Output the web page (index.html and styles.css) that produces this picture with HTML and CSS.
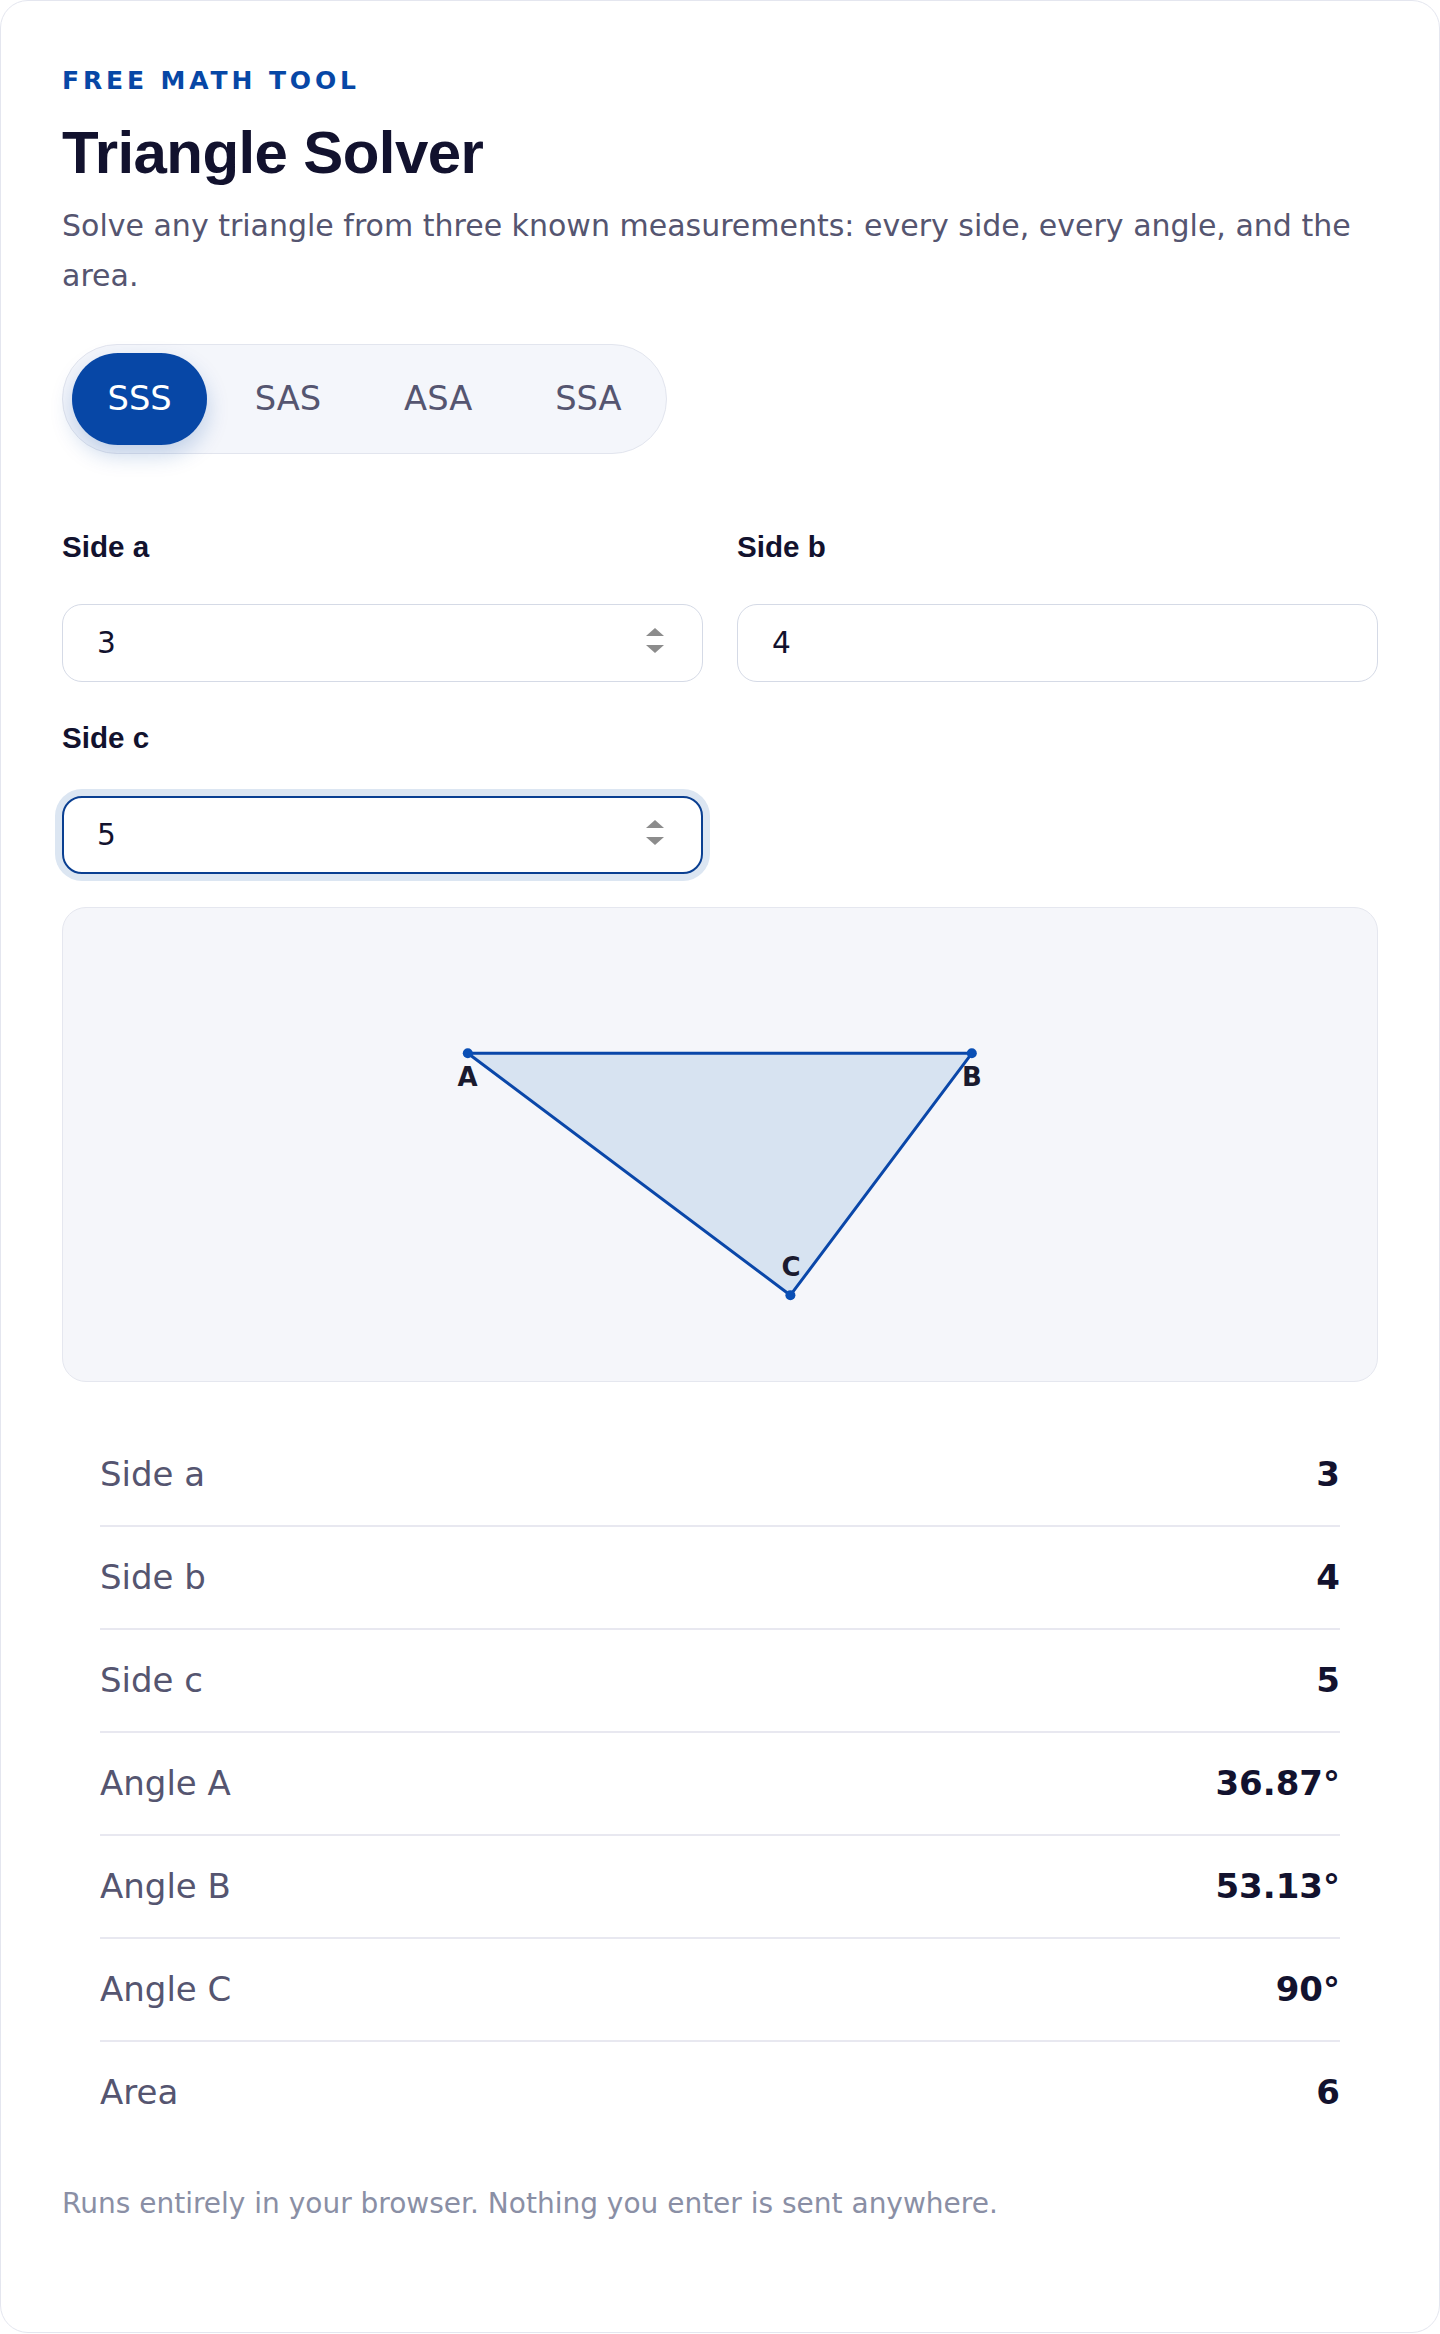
FILE: index.html
```html
<!DOCTYPE html>
<html lang="en">
<head>
    <meta charset="UTF-8">
    <meta name="viewport" content="width=device-width, initial-scale=1.0">
    <title>Triangle Solver</title>
    <link rel="stylesheet" href="styles.css">
</head>
<body>
    <main class="card">
        <p class="kicker">FREE MATH TOOL</p>
        <h1 class="title">Triangle Solver</h1>
        <p class="lead">Solve any triangle from three known measurements: every side, every angle, and the area.</p>

        <div class="modes">
            <button class="mode active">SSS</button>
            <button class="mode">SAS</button>
            <button class="mode">ASA</button>
            <button class="mode">SSA</button>
        </div>

        <div class="fields">
            <label class="field">
                <span class="field-label">Side a</span>
                <span class="input-wrap">
                    <input class="field-input" type="number" value="3">
                    <svg class="spin" viewBox="0 0 18 25" width="18" height="25"><polygon points="0,8 9,0 18,8"/><polygon points="0,17 18,17 9,25"/></svg>
                </span>
            </label>
            <label class="field">
                <span class="field-label">Side b</span>
                <span class="input-wrap">
                    <input class="field-input" type="number" value="4">
                </span>
            </label>
            <label class="field">
                <span class="field-label">Side c</span>
                <span class="input-wrap">
                    <input class="field-input focused" type="number" value="5">
                    <svg class="spin" viewBox="0 0 18 25" width="18" height="25"><polygon points="0,8 9,0 18,8"/><polygon points="0,17 18,17 9,25"/></svg>
                </span>
            </label>
        </div>

        <div class="diagram">
            <svg class="diagram-svg" viewBox="0 0 1314 473" width="1314" height="473">
                <polygon points="404.8,145.3 908.8,145.3 727.4,387.2" fill="#d7e3f1" stroke="#0a47a9" stroke-width="3" stroke-linejoin="round"/>
                <circle cx="404.8" cy="145.3" r="5" fill="#0a4fb5"/>
                <circle cx="908.8" cy="145.3" r="5" fill="#0a4fb5"/>
                <circle cx="727.4" cy="387.2" r="5" fill="#0a4fb5"/>
                <text class="vertex" x="404.5" y="178" text-anchor="middle">A</text>
                <text class="vertex" x="909" y="178" text-anchor="middle">B</text>
                <text class="vertex" x="728" y="368" text-anchor="middle">C</text>
            </svg>
        </div>

        <div class="results">
            <div class="row"><span class="row-label">Side a</span><span class="row-value">3</span></div>
            <div class="row"><span class="row-label">Side b</span><span class="row-value">4</span></div>
            <div class="row"><span class="row-label">Side c</span><span class="row-value">5</span></div>
            <div class="row"><span class="row-label">Angle A</span><span class="row-value">36.87°</span></div>
            <div class="row"><span class="row-label">Angle B</span><span class="row-value">53.13°</span></div>
            <div class="row"><span class="row-label">Angle C</span><span class="row-value">90°</span></div>
            <div class="row"><span class="row-label">Area</span><span class="row-value">6</span></div>
        </div>

        <p class="note">Runs entirely in your browser. Nothing you enter is sent anywhere.</p>
    </main>
</body>
</html>
```

FILE: styles.css
```css
body {
    margin: 0;
    background: #ffffff;
    font-family: "DejaVu Sans", Verdana, sans-serif;
    color: #12122e;
}

.card {
    box-sizing: border-box;
    width: 1440px;
    padding: 65px 61px 111px;
    border: 1px solid #e4e6ef;
    border-radius: 28px;
    background: #ffffff;
}

.kicker {
    margin: 0;
    font-size: 25px;
    line-height: 30px;
    font-weight: bold;
    letter-spacing: 0.155em;
    color: #0747a6;
}

.title {
    margin: 23px 0 0;
    font-family: "Liberation Sans", Arial, sans-serif;
    font-size: 60px;
    line-height: 1.13;
    font-weight: bold;
    letter-spacing: -0.01em;
    color: #12122e;
}

.lead {
    margin: 14.5px 0 0;
    font-size: 30px;
    line-height: 50px;
    color: #555570;
}

.modes {
    display: inline-flex;
    gap: 12px;
    margin-top: 42.7px;
    padding: 8px 9px;
    border: 1px solid #e2e5ee;
    border-radius: 999px;
    background: #f4f6fb;
}

.mode {
    padding: 26.5px 35.5px;
    border: 0;
    border-radius: 999px;
    background: transparent;
    font-family: "DejaVu Sans", Verdana, sans-serif;
    font-size: 33.7px;
    line-height: 39px;
    color: #555570;
    cursor: pointer;
}

.mode.active {
    background: #0747a6;
    color: #ffffff;
    box-shadow: 0 10px 22px rgba(7, 71, 166, 0.22);
}

.fields {
    display: grid;
    grid-template-columns: 1fr 1fr;
    gap: 38px 34px;
    margin-top: 75px;
}

.field {
    display: flex;
    flex-direction: column;
    gap: 40px;
}

.field-label {
    font-family: "Liberation Sans", Arial, sans-serif;
    font-size: 29.6px;
    line-height: 35.5px;
    font-weight: bold;
    color: #12122e;
}

.input-wrap {
    position: relative;
    display: block;
}

.field-input {
    box-sizing: border-box;
    display: block;
    width: 100%;
    height: 78px;
    padding: 0 34px;
    border: 1px solid #d5dae6;
    border-radius: 20px;
    background: #ffffff;
    font-family: "DejaVu Sans", Verdana, sans-serif;
    font-size: 29.6px;
    color: #12122e;
    outline: none;
    -moz-appearance: textfield;
}

.field-input::-webkit-inner-spin-button,
.field-input::-webkit-outer-spin-button {
    -webkit-appearance: none;
    margin: 0;
}

.field-input.focused {
    border: 2px solid #0a3f91;
    padding: 0 33px;
    box-shadow: 0 0 0 7px #dce6f2;
}

.spin {
    position: absolute;
    top: 24px;
    right: 39px;
    fill: #8c8c8c;
    pointer-events: none;
}

.diagram {
    margin-top: 33px;
    border: 1px solid #e5e7ef;
    border-radius: 24px;
    background: #f5f6fa;
}

.diagram-svg {
    display: block;
}

.vertex {
    font-family: "DejaVu Sans", Verdana, sans-serif;
    font-size: 26px;
    font-weight: bold;
    fill: #1a1a2e;
}

.results {
    margin: 42px 38px 0;
}

.row {
    display: flex;
    justify-content: space-between;
    padding: 31px 0;
    border-bottom: 2px solid #e8e8f0;
    font-size: 34px;
    line-height: 39px;
}

.row:last-child {
    border-bottom: 0;
}

.row-label {
    color: #555570;
}

.row-value {
    font-weight: bold;
    color: #12122e;
}

.note {
    margin: 45px 0 0;
    font-size: 28px;
    line-height: 32.6px;
    color: #8a8fa5;
}
```
